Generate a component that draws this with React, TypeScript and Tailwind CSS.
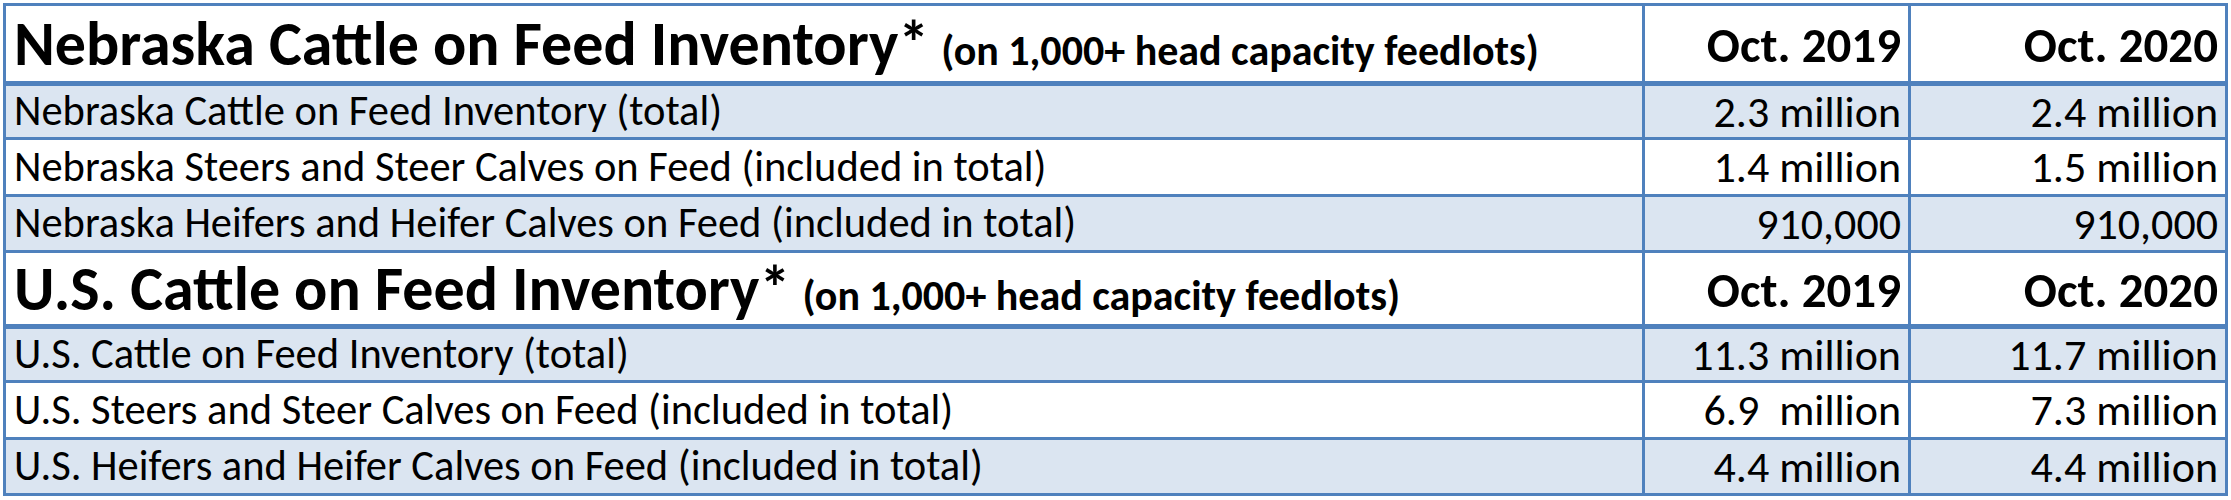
import React from "react";

type Row = [string, string, string];

const sections: { title: string; head: string; heights: string[]; rows: Row[] }[] = [
  {
    title: "Nebraska Cattle on Feed Inventory*",
    head: "h-[79px]",
    heights: ["h-[55px]", "h-[57px]", "h-[56px]"],
    rows: [
      ["Nebraska Cattle on Feed Inventory (total)", "2.3 million", "2.4 million"],
      ["Nebraska Steers and Steer Calves on Feed (included in total)", "1.4 million", "1.5 million"],
      ["Nebraska Heifers and Heifer Calves on Feed (included in total)", "910,000", "910,000"],
    ],
  },
  {
    title: "U.S. Cattle on Feed Inventory*",
    head: "h-[75px]",
    heights: ["h-[55px]", "h-[57px]", "h-[56px]"],
    rows: [
      ["U.S. Cattle on Feed Inventory (total)", "11.3 million", "11.7 million"],
      ["U.S. Steers and Steer Calves on Feed (included in total)", "6.9  million", "7.3 million"],
      ["U.S. Heifers and Heifer Calves on Feed (included in total)", "4.4 million", "4.4 million"],
    ],
  },
];

function App() {
  return (
    <div className="w-[2231px] h-[500px] overflow-hidden bg-white pt-[3px] pl-[3px] font-['Carlito','Open_Sans',sans-serif] text-black">
      <table className="w-[2222px] table-fixed border-collapse border-[3px] border-[#4f81bd]">
        <colgroup>
          <col className="w-[1639px]" />
          <col className="w-[266px]" />
          <col className="w-[317px]" />
        </colgroup>
        <tbody>
          {sections.map((s) => (
            <React.Fragment key={s.title}>
              <tr className={`${s.head} bg-white`}>
                <td className="border-[3px] border-b-[5px] border-[#4f81bd] pl-[8px] align-middle leading-none whitespace-nowrap">
                  <span className="text-[62px] font-bold">{s.title}</span>
                  <span className="ml-[12px] text-[42px] font-bold">(on 1,000+ head capacity feedlots)</span>
                </td>
                <td className="border-[3px] border-b-[5px] border-[#4f81bd] pr-[7px] pt-[4px] text-right align-middle text-[49px] font-bold leading-none">
                  Oct. 2019
                </td>
                <td className="border-[3px] border-b-[5px] border-[#4f81bd] pr-[7px] pt-[4px] text-right align-middle text-[49px] font-bold leading-none">
                  Oct. 2020
                </td>
              </tr>
              {s.rows.map((r, i) => (
                <tr key={r[0]} className={`${s.heights[i]} ${i === 1 ? "bg-white" : "bg-[#dbe5f1]"}`}>
                  <td className="border-[3px] border-[#4f81bd] pl-[8px] align-middle text-[42.5px] leading-none whitespace-nowrap">
                    {r[0]}
                  </td>
                  <td className="border-[3px] border-[#4f81bd] pr-[7px] text-right align-middle text-[44px] leading-none whitespace-pre">
                    {r[1]}
                  </td>
                  <td className="border-[3px] border-[#4f81bd] pr-[7px] text-right align-middle text-[44px] leading-none whitespace-pre">
                    {r[2]}
                  </td>
                </tr>
              ))}
            </React.Fragment>
          ))}
        </tbody>
      </table>
    </div>
  );
}

export default App;
